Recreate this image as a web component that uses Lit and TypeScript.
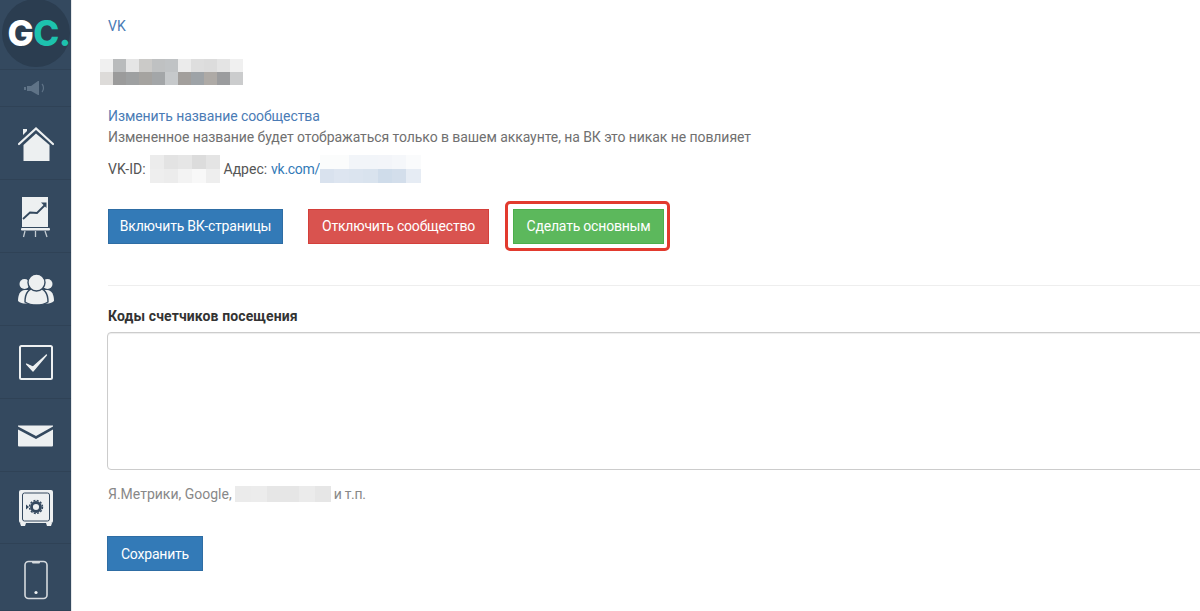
import { LitElement, html, css, svg } from "lit";
import { customElement } from "lit/decorators.js";

const mosaic = (rows: string[][], cell: number) => html`<span class="mosaic">${rows.map(
  (r) => html`<span class="mrow">${r.map((c) => html`<span style="background:${c};width:${cell}px;height:${cell}px"></span>`)}</span>`
)}</span>`;

const icons = [
  svg`<path d="M23 17V11h4v2z" fill="#edf0f1"/><path d="M19 26L36 10.500l17 15.500" fill="none" stroke="#edf0f1" stroke-width="2.200" stroke-linecap="round"/><path d="M23.500 27L36 15.500 49.500 27v16h-26z" fill="#edf0f1"/>`,
  svg`<rect x="22" y="6" width="26" height="30" fill="#edf0f1"/><path d="M23 28l7-6.500 7 .5 8-8" fill="none" stroke="#34495f" stroke-width="1.800"/><path d="M41 11.500h5.500V17z" fill="#34495f"/><rect x="21" y="37" width="29" height="2.400" rx="1" fill="#edf0f1"/><path d="M25 40l-1.500 6M35.500 40v6M45 40l2 6" stroke="#c3cbd1" stroke-width="1.300"/>`,
  svg`<circle cx="24.500" cy="20" r="5" fill="#edf0f1"/><circle cx="47.500" cy="20" r="5" fill="#edf0f1"/><path d="M18 37c0-6 2-11 7-11h22c5 0 7 5 7 11-2 2-5 2.500-7 2.500H25c-2 0-5-.5-7-2.500z" fill="#edf0f1"/><path d="M25 38c0-9 4-14 11.500-14S48 29 48 38c-3 2-7 3-11.500 3S28 40 25 38z" fill="#edf0f1" stroke="#34495f" stroke-width="1.400"/><circle cx="36.500" cy="18.500" r="8.500" fill="#edf0f1" stroke="#34495f" stroke-width="1.400"/>`,
  svg`<rect x="20" y="9" width="32" height="33" rx="1.500" fill="none" stroke="#edf0f1" stroke-width="2"/><path d="M26.500 27l6.500 7 13.500-16-13.500 12z" fill="#edf0f1" stroke="#edf0f1" stroke-width="1.200" stroke-linejoin="round"/>`,
  svg`<path d="M18 15.500h35v1L36 26 18 16.500z" fill="#edf0f1"/><path d="M18 19.500L36 29l17-9.500v16a1 1 0 0 1-1 1H19a1 1 0 0 1-1-1z" fill="#edf0f1"/>`,
  svg`<rect x="19" y="7" width="34" height="33" rx="2" fill="#edf0f1"/><rect x="22.500" y="10" width="27" height="28" rx="2" fill="none" stroke="#34495f" stroke-width="1"/><path d="M20 40h6l-1 3h-4zM46 40h6l-1 3h-4z" fill="#edf0f1"/><circle cx="36" cy="24" r="4.500" fill="none" stroke="#34495f" stroke-width="2.800"/><circle cx="36" cy="24" r="6.500" fill="none" stroke="#34495f" stroke-width="1.400" stroke-dasharray="2 1.400"/><path d="M26 21.500l3 2.500-3 2.500z" fill="#34495f"/>`,
  svg`<rect x="25" y="9.500" width="22" height="37" rx="3.500" fill="none" stroke="#d5dade" stroke-width="1.600"/><path d="M32 9.500h8v1a1 1 0 0 1-1 1h-6a1 1 0 0 1-1-1z" fill="#d5dade"/><circle cx="36" cy="40.500" r="1.600" fill="#edf0f1"/>`,
];
const heights = [73, 73, 73, 73, 73, 72, 67];

const name = [
  ["#f0f0f0","#b9bbbc","#e5e5e5","#cbcac8","#bfc1c2","#c0c3c5","#ebebeb","#dedede","#dcdcdc","#e4e4e4","#f0f0f0"],
  ["#dddbd9","#9b9b9b","#9ea0a1","#a5a3a0","#a3a6a8","#c6c9cb","#a29f9c","#9ea3a7","#aeaaa6","#9b9c9e","#cbcccd"],
];
const vkId = [
  ["#ececec","#e3e3e3","#e6e6e6","#dcdcdc","#e4e4e4"],
  ["#eeeeee","#ececec","#f3f3f3","#f8f8f8","#eeeeee"],
];
const addr = [
  ["#fbfcfc","#fbfcfc","#f2f5f9","#f2f5f9","#f3f5f9","#f5f7fa","#fafbfc"],
  ["#d9e2ee","#dde5f0","#dbe4ef","#d9e3ee","#cfdcea","#d3deeb","#e6ecf4"],
];
const hint = [["#ebebeb","#ececec","#e6e6e6","#e6e6e6","#ebebeb","#e6e6e6"]];

@customElement("app-root")
export class AppRoot extends LitElement {
  static styles = css`
    :host { display: flex; width: 1200px; height: 611px; overflow: hidden; background: #fff;
      font-family: Roboto, "Open Sans", sans-serif; font-size: 14px; color: #555; }
    .side { flex: none; width: 71px; background: #34495f; border-right: 1px solid #e6e8ea; display: flex; flex-direction: column; }
    .logo { position: relative; height: 70px; border-bottom: 1px solid #2f4256; box-sizing: border-box; }
    .disc { position: absolute; left: 2px; top: -1px; width: 68px; height: 68px; border-radius: 50%; background: #2b3d50;
      display: flex; align-items: center; justify-content: center; padding-left: 6px; box-sizing: border-box; font: 800 35px/1 Inter, sans-serif; letter-spacing: -0.500px; color: #fff; }
    .disc b { color: #1dc2ae; font-weight: 800; }
    .disc i { color: #1dc2ae; font-style: normal; }
    .speak { height: 37px; border-bottom: 1px solid #2f4256; box-sizing: border-box; display: flex; align-items: center; justify-content: center; }
    .item { border-bottom: 1px solid #2f4256; box-sizing: border-box; display: flex; align-items: center; justify-content: center; overflow: hidden; }
    .item svg { display: block; flex: none; }
    .main { flex: 1; min-width: 0; padding-left: 36px; }
    a { color: #337ab7; text-decoration: none; letter-spacing: -0.300px; }
    .vk { margin-top: 17px; line-height: 18px; color: #4a7bb5; }
    .mosaic { display: inline-block; vertical-align: middle; }
    .mrow { display: flex; }
    .name { margin: 24px 0 0 -8px; height: 26px; display: block; }
    .change { margin-top: 21px; line-height: 21px; color: #4a7bb5; letter-spacing: -0.080px; }
    .note { line-height: 21px; letter-spacing: -0.070px; color: #707070; }
    .ids { margin-top: 7px; height: 28px; line-height: 20px; display: flex; align-items: center; color: #555; }
    .ids a { margin-left: 4px; }
    .ids .first { margin: 0 4px; }
    .btns { margin-top: 18px; display: flex; align-items: center; gap: 25px; height: 50px; }
    .btn { height: 35px; box-sizing: border-box; display: inline-flex; align-items: center; justify-content: center; color: #fff; font-size: 14px; letter-spacing: -0.200px; border: 1px solid transparent; }
    .blue { background: #337ab7; border-color: #2e6da4; }
    .red { background: #d9534f; border-color: #d43f3a; }
    .green { background: #5cb85c; border-color: #4cae4c; }
    .w1 { width: 175px; } .w2 { width: 181px; } .w3 { width: 151px; } .w4 { width: 96px; }
    .mark { margin-left: -9px; border: 3px solid #e23a2e; border-radius: 5px; padding: 4.500px 3px 4.500px 5px; display: flex; }
    hr { border: 0; border-top: 1px solid #eee; margin: 34px 0 0; }
    .label { margin-top: 20px; line-height: 20px; font-weight: 700; letter-spacing: 0.120px; color: #333; }
    .ta { margin: 6px -20px 0 -1px; height: 138px; box-sizing: border-box; border: 1px solid #ccc; border-radius: 4px; box-shadow: inset 0 1px 1px rgba(0,0,0,.075); }
    .hint { margin-top: 14px; height: 20px; display: flex; align-items: center; gap: 3px; color: #888; }
    .tail { letter-spacing: -0.300px; }
    .save { margin: 32px 0 0 -1px; }
  `;
  render() {
    return html`
      <nav class="side">
        <div class="logo"><div class="disc"><span>G<b>C</b><i>.</i></span></div></div>
        <div class="speak"><svg width="24" height="16" viewBox="0 0 24 16"><path d="M0 7h2v3H0zM3 6h4l7-5h1v14h-1L7 11H3z" fill="#5f7387"/><path d="M18 4c2 2 2 6 0 8" fill="none" stroke="#5f7387" stroke-width="1.200"/></svg></div>
        ${icons.map((ic, i) => html`<div class="item" style="height:${heights[i]}px"><svg width="72" height="50" viewBox="0 0 72 50">${ic}</svg></div>`)}
      </nav>
      <main class="main">
        <div class="vk">VK</div>
        <div class="name">${mosaic(name, 13)}</div>
        <div class="change">Изменить название сообщества</div>
        <div class="note">Измененное название будет отображаться только в вашем аккаунте, на ВК это никак не повлияет</div>
        <div class="ids">VK-ID:<span class="first">${mosaic(vkId, 14)}</span>Адрес:<a>vk.com/</a>${mosaic(addr, 14.4)}</div>
        <div class="btns">
          <div class="btn blue w1">Включить ВК-страницы</div>
          <div class="btn red w2">Отключить сообщество</div>
          <div class="mark"><div class="btn green w3">Сделать основным</div></div>
        </div>
        <hr />
        <div class="label">Коды счетчиков посещения</div>
        <div class="ta"></div>
        <div class="hint">Я.Метрики, Google,${mosaic(hint, 16)}<span class="tail">и т.п.</span></div>
        <div class="btn blue w4 save">Сохранить</div>
      </main>
    `;
  }
}
